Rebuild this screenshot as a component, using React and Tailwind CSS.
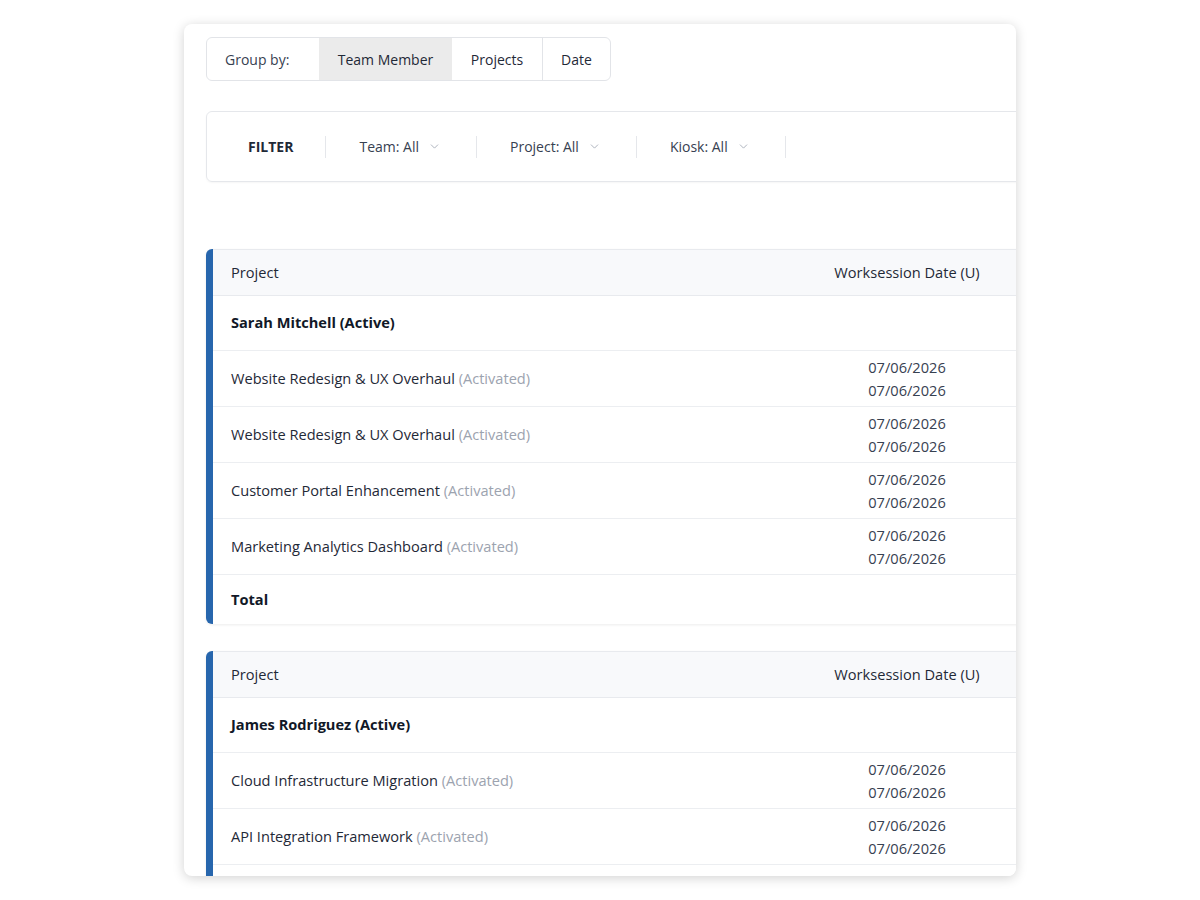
import { ChevronDown } from "lucide-react";

const groups = [
  {
    name: "Sarah Mitchell (Active)",
    rows: [
      "Website Redesign & UX Overhaul",
      "Website Redesign & UX Overhaul",
      "Customer Portal Enhancement",
      "Marketing Analytics Dashboard",
    ],
  },
  {
    name: "James Rodriguez (Active)",
    rows: [
      "Cloud Infrastructure Migration",
      "API Integration Framework",
      "Mobile App Development",
      "Security Audit & Compliance",
    ],
  },
];

const FilterItem = ({ label }) => (
  <div className="flex items-center gap-[9px] pl-[33px] pr-[35px] border-l border-[#e5e7eb] h-[22px] text-[#374151]">
    <span>{label}</span>
    <ChevronDown size={13} strokeWidth={1.5} className="text-[#9ca3af]" />
  </div>
);

const GroupTable = ({ group }) => (
  <div className="rounded-md border-l-[7px] border-[#2766ad] shadow-[0_1px_3px_rgba(0,0,0,0.08)] bg-white text-[14.6px]">
    <div className="flex h-[47px] items-center bg-[#f8f9fb] border-y border-[#e8eaee] text-[#1f2937]">
      <div className="w-[604px] pl-[18px]">Project</div>
      <div className="w-[180px] text-center">Worksession Date (U)</div>
    </div>
    <div className="flex h-[54px] items-center pl-[18px] font-bold text-[#111827]">
      {group.name}
    </div>
    {group.rows.map((r, i) => (
      <div key={i} className="flex h-[56px] items-center border-t border-[#eceef1]">
        <div className="w-[604px] pl-[18px] text-[#1f2937]">
          {r} <span className="text-[#9ca3af]">(Activated)</span>
        </div>
        <div className="w-[180px] text-center text-[#374151] leading-[23px]">
          <div>07/06/2026</div>
          <div>07/06/2026</div>
        </div>
      </div>
    ))}
    <div className="flex h-[50px] items-center pl-[18px] font-bold text-[#111827] border-t border-[#eceef1]">
      Total
    </div>
  </div>
);

export default function App() {
  return (
    <div
      className="w-full h-[900px] bg-white flex justify-center pt-6 text-[14px]"
      style={{ fontFamily: '"Open Sans", "Noto Sans", sans-serif' }}
    >
      <div className="w-[832px] h-[852px] rounded-lg bg-white shadow-[0_2px_12px_rgba(0,0,0,0.18)] overflow-hidden pl-[22px] pt-[13px]">
        <div className="w-[1000px]">
          <div className="inline-flex h-[44px] border border-[#e2e4e8] rounded-md overflow-hidden text-[#1f2937]">
            <div className="w-[112px] flex items-center pl-[18px] text-[#374151]">Group by:</div>
            <div className="w-[133px] flex items-center justify-center bg-[#ebebeb]">Team Member</div>
            <div className="w-[90px] flex items-center justify-center">Projects</div>
            <div className="w-[68px] flex items-center justify-center border-l border-[#e2e4e8]">Date</div>
          </div>

          <div className="mt-[30px] h-[71px] flex items-center border border-[#e5e7eb] rounded-md shadow-[0_1px_2px_rgba(0,0,0,0.04)]">
            <div className="pl-[41px] pr-[32px] font-bold text-[#1f2937]">FILTER</div>
            <FilterItem label="Team: All" />
            <FilterItem label="Project: All" />
            <FilterItem label="Kiosk: All" />
            <div className="border-l border-[#e5e7eb] h-[22px]" />
          </div>

          <div className="mt-[67px] flex flex-col gap-[27px]">
            {groups.map((g) => (
              <GroupTable key={g.name} group={g} />
            ))}
          </div>
        </div>
      </div>
    </div>
  );
}
